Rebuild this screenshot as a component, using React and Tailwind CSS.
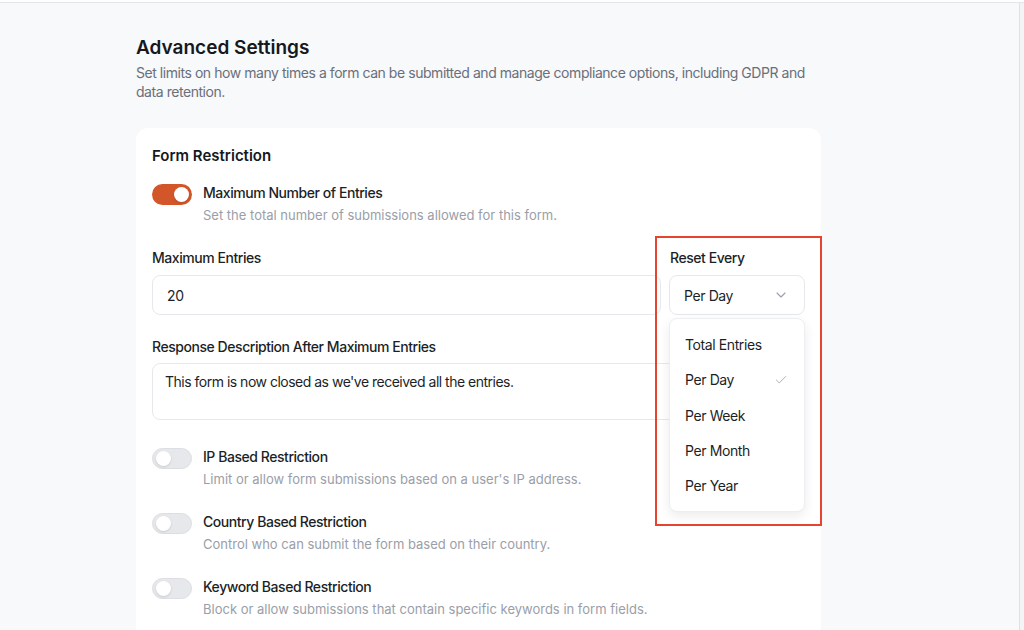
import React from "react";
import { ChevronDown, Check } from "lucide-react";

const font = { fontFamily: "Inter, 'Noto Sans', Arial, sans-serif" };

function Toggle({ on }) {
  return (
    <div
      className={`w-10 h-[21px] rounded-full p-[3px] flex items-center shrink-0 ${
        on ? "bg-[#d3562a] justify-end" : "bg-[#e7e8ec] justify-start border border-[#dcdee3]"
      }`}
    >
      <div className="w-[15px] h-[15px] rounded-full bg-white shadow-sm" />
    </div>
  );
}

function ToggleRow({ on, title, desc, className = "" }) {
  return (
    <div className={`flex gap-[11px] ${className}`}>
      <div className="pt-[1px]">
        <Toggle on={on} />
      </div>
      <div className="flex flex-col">
        <span className="text-[14px] leading-5 font-medium tracking-[-0.45px] text-[#1c1f26]">{title}</span>
        <span className="text-[13px] leading-5 text-[#9a9ea8] mt-[2px]">{desc}</span>
      </div>
    </div>
  );
}

const options = ["Total Entries", "Per Day", "Per Week", "Per Month", "Per Year"];

export default function App() {
  return (
    <div className="w-[1024px] h-[630px] overflow-hidden bg-[#f8f9fb] flex flex-col relative" style={font}>
      <div className="h-[3px] bg-white border-b border-[#e4e6ea] shrink-0" />
      <div className="flex flex-1 min-h-0">
        <div className="flex-1 pl-[136px] pt-[31px]">
          <div className="w-[685px]">
            <h1 className="text-[19px] leading-7 font-semibold text-[#15181e]">Advanced Settings</h1>
            <p className="text-[14px] leading-[19px] tracking-[-0.45px] text-[#6a6f7a] mt-[1px]">
              Set limits on how many times a form can be submitted and manage compliance options, including GDPR and data retention.
            </p>

            <div className="mt-[27px] bg-white rounded-xl px-4 pt-4 pb-6">
              <h2 className="text-[15px] leading-6 font-semibold text-[#15181e]">Form Restriction</h2>

              <ToggleRow
                on
                className="mt-[15px]"
                title="Maximum Number of Entries"
                desc="Set the total number of submissions allowed for this form."
              />

              <div className="flex gap-2 mt-[23px]">
                <div className="flex-1 flex flex-col">
                  <label className="text-[14px] leading-5 font-medium tracking-[-0.45px] text-[#1c1f26]">Maximum Entries</label>
                  <div className="mt-[7px] h-10 rounded-lg border border-[#e6e8ec] bg-white flex items-center px-[14px] text-[14px] tracking-[-0.3px] text-[#1c1f26]">
                    20
                  </div>
                </div>
                <div className="w-[136px] flex flex-col relative">
                  <label className="text-[14px] leading-5 font-medium tracking-[-0.45px] text-[#1c1f26] pl-[1px]">Reset Every</label>
                  <div className="mt-[7px] h-10 rounded-lg border border-[#e6e8ec] bg-white flex items-center justify-between pl-[14px] pr-[15px] text-[14px] tracking-[-0.4px] text-[#1c1f26]">
                    <span>Per Day</span>
                    <ChevronDown className="w-4 h-4 text-[#9a9ea8]" strokeWidth={1.6} />
                  </div>
                  <div className="absolute top-[70px] left-0 right-0 z-10 bg-white rounded-lg border border-[#eceef1] shadow-[0_4px_12px_rgba(0,0,0,0.08)] py-2">
                    {options.map((o) => (
                      <div key={o} className="h-[35.3px] flex items-center justify-between pl-[15px] pr-[16px] text-[14px] tracking-[-0.4px] text-[#1c1f26]">
                        <span>{o}</span>
                        {o === "Per Day" && <Check className="w-[14px] h-[14px] text-[#a8acb5]" strokeWidth={1.6} />}
                      </div>
                    ))}
                  </div>
                </div>
              </div>

              <div className="flex flex-col mt-[22px]">
                <label className="text-[14px] leading-5 font-medium tracking-[-0.45px] text-[#1c1f26]">Response Description After Maximum Entries</label>
                <div className="mt-[6px] h-[57px] rounded-lg border border-[#e6e8ec] bg-white px-3 pt-[8px] text-[14px] leading-5 tracking-[-0.5px] text-[#1c1f26]">
                  This form is now closed as we've received all the entries.
                </div>
              </div>

              <ToggleRow
                className="mt-[27px]"
                title="IP Based Restriction"
                desc="Limit or allow form submissions based on a user's IP address."
              />
              <ToggleRow
                className="mt-[23px]"
                title="Country Based Restriction"
                desc="Control who can submit the form based on their country."
              />
              <ToggleRow
                className="mt-[23px]"
                title="Keyword Based Restriction"
                desc="Block or allow submissions that contain specific keywords in form fields."
              />
            </div>
          </div>
        </div>
        <div className="w-[5px] shrink-0 bg-[#f3f4f6] border-l border-[#dfe1e5]" />
      </div>

      {/* annotation highlight */}
      <div className="absolute left-[655px] top-[236px] w-[167px] h-[290px] border-2 border-[#e5452f] pointer-events-none z-20" />
    </div>
  );
}
